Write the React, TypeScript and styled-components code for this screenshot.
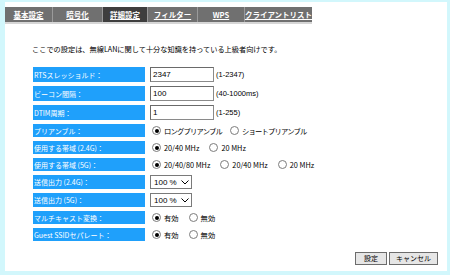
import styled, { createGlobalStyle } from "styled-components";

const GlobalStyle = createGlobalStyle`
  html, body {
    margin: 0;
    padding: 0;
    background: #d2f7fc;
  }
  body {
    font-family: "Noto Sans CJK JP", "Liberation Sans", sans-serif;
    font-size: 7px;
    color: #000;
  }
`;

const Frame = styled.div`
  width: 450px;
  height: 275px;
  box-sizing: border-box;
  padding: 2px 3px 4px 5px;
  background: #d2f7fc;
`;

const Panel = styled.div`
  height: 100%;
  background: #fff;
  display: flex;
  flex-direction: column;
`;

const TabBar = styled.div`
  margin-top: 5px;
  width: 307px;
  height: 15px;
  display: flex;
  background: #707070;
  border-bottom: 2px solid #d6d6d6;
`;

const Tab = styled.div<{ $w: number; $active?: boolean }>`
  width: ${(p) => p.$w}px;
  display: flex;
  align-items: center;
  justify-content: center;
  background: ${(p) => (p.$active ? "#3e3e3e" : "transparent")};
  border-right: 1px solid #9a9a9a;
  color: #fff;
  font-size: 7.5px;
  font-weight: bold;
  text-decoration: underline;
  white-space: nowrap;
  &:last-child {
    border-right: none;
  }
`;

const Intro = styled.p`
  margin: 20px 0 0 27px;
  line-height: 10px;
  font-size: 7.2px;
`;

const Form = styled.div`
  margin: 13px 0 0 28px;
  display: grid;
  grid-template-columns: 112px auto;
  column-gap: 5px;
  row-gap: 4px;
`;

const Label = styled.div<{ $h: number }>`
  height: ${(p) => p.$h}px;
  background: #1fa0fb;
  color: #fff;
  display: flex;
  align-items: center;
  padding-left: 1px;
  white-space: nowrap;
`;

const Value = styled.div`
  display: flex;
  align-items: center;
  white-space: nowrap;
`;

const TextInput = styled.div`
  width: 60px;
  height: 13px;
  border: 1px solid #8a8a8a;
  border-top-color: #6a6a6a;
  border-left-color: #6a6a6a;
  display: flex;
  align-items: center;
  padding-left: 2px;
  font-family: "Liberation Sans", sans-serif;
  font-size: 8px;
  box-sizing: content-box;
  margin-right: 2px;
`;

const Range = styled.span`
  font-family: "Liberation Sans", sans-serif;
  font-size: 7.5px;
`;

const SelectBox = styled.div`
  width: 35px;
  height: 12px;
  border: 1px solid #7a7a7a;
  display: flex;
  align-items: center;
  justify-content: space-between;
  padding: 0 2px 0 3px;
  font-family: "Liberation Sans", sans-serif;
  font-size: 8px;
`;

const RadioItem = styled.label<{ $tight?: boolean }>`
  display: flex;
  align-items: center;
  gap: 3px;
  margin-left: 2px;
  margin-right: ${(p) => (p.$tight ? 6 : 8)}px;
  font-size: 7.3px;
  letter-spacing: ${(p) => (p.$tight ? "-0.8px" : "0")};
`;

const RadioDot = styled.span<{ $on?: boolean }>`
  width: 7px;
  height: 7px;
  border-radius: 50%;
  border: 1px solid #7c7c7c;
  background: #fff;
  position: relative;
  &::after {
    content: "";
    display: ${(p) => (p.$on ? "block" : "none")};
    position: absolute;
    left: 1.5px;
    top: 1.5px;
    width: 4px;
    height: 4px;
    border-radius: 50%;
    background: #000;
  }
`;

const Footer = styled.div`
  margin-top: auto;
  display: flex;
  justify-content: flex-end;
  gap: 2px;
  padding: 0 9px 6px 0;
`;

const Button = styled.button<{ $w: number }>`
  width: ${(p) => p.$w}px;
  height: 13px;
  padding: 0;
  border: 1px solid #6c6c6c;
  background: #e6e6e6;
  font-family: "Noto Sans CJK JP", sans-serif;
  font-size: 7px;
  line-height: 1;
  color: #000;
`;

const tabs = [
  { name: "基本設定", w: 48 },
  { name: "暗号化", w: 50 },
  { name: "詳細設定", w: 45, active: true },
  { name: "フィルター", w: 50 },
  { name: "WPS", w: 47 },
  { name: "クライアントリスト", w: 67 },
];

function Radios({ items, tight }: { items: string[]; tight?: boolean }) {
  return (
    <>
      {items.map((t, i) => (
        <RadioItem key={t} $tight={tight}>
          <RadioDot $on={i === 0} />
          {t}
        </RadioItem>
      ))}
    </>
  );
}

function Chevron() {
  return (
    <svg width="8" height="5" viewBox="0 0 8 5">
      <path d="M0.5 0.5 L4 4 L7.5 0.5" fill="none" stroke="#000" strokeWidth="1" />
    </svg>
  );
}

export default function App() {
  return (
    <Frame>
      <GlobalStyle />
      <Panel>
        <TabBar>
          {tabs.map((t) => (
            <Tab key={t.name} $w={t.w} $active={t.active}>
              {t.name}
            </Tab>
          ))}
        </TabBar>
        <Intro>
          ここでの設定は、無線LANに関して十分な知識を持っている上級者向けです。
        </Intro>
        <Form>
          <Label $h={15}>RTSスレッショルド：</Label>
          <Value>
            <TextInput>2347</TextInput>
            <Range>(1-2347)</Range>
          </Value>
          <Label $h={15}>ビーコン間隔：</Label>
          <Value>
            <TextInput>100</TextInput>
            <Range>(40-1000ms)</Range>
          </Value>
          <Label $h={15}>DTIM周期：</Label>
          <Value>
            <TextInput>1</TextInput>
            <Range>(1-255)</Range>
          </Value>
          <Label $h={13}>プリアンブル：</Label>
          <Value>
            <Radios tight items={["ロングプリアンブル", "ショートプリアンブル"]} />
          </Value>
          <Label $h={13}>使用する帯域 (2.4G)：</Label>
          <Value>
            <Radios items={["20/40 MHz", "20 MHz"]} />
          </Value>
          <Label $h={13}>使用する帯域 (5G)：</Label>
          <Value>
            <Radios items={["20/40/80 MHz", "20/40 MHz", "20 MHz"]} />
          </Value>
          <Label $h={14}>送信出力 (2.4G)：</Label>
          <Value>
            <SelectBox>
              100 %
              <Chevron />
            </SelectBox>
          </Value>
          <Label $h={14}>送信出力 (5G)：</Label>
          <Value>
            <SelectBox>
              100 %
              <Chevron />
            </SelectBox>
          </Value>
          <Label $h={13}>マルチキャスト変換：</Label>
          <Value>
            <Radios items={["有効", "無効"]} />
          </Value>
          <Label $h={13}>Guest SSIDセパレート：</Label>
          <Value>
            <Radios items={["有効", "無効"]} />
          </Value>
        </Form>
        <Footer>
          <Button $w={32}>設定</Button>
          <Button $w={49}>キャンセル</Button>
        </Footer>
      </Panel>
    </Frame>
  );
}
